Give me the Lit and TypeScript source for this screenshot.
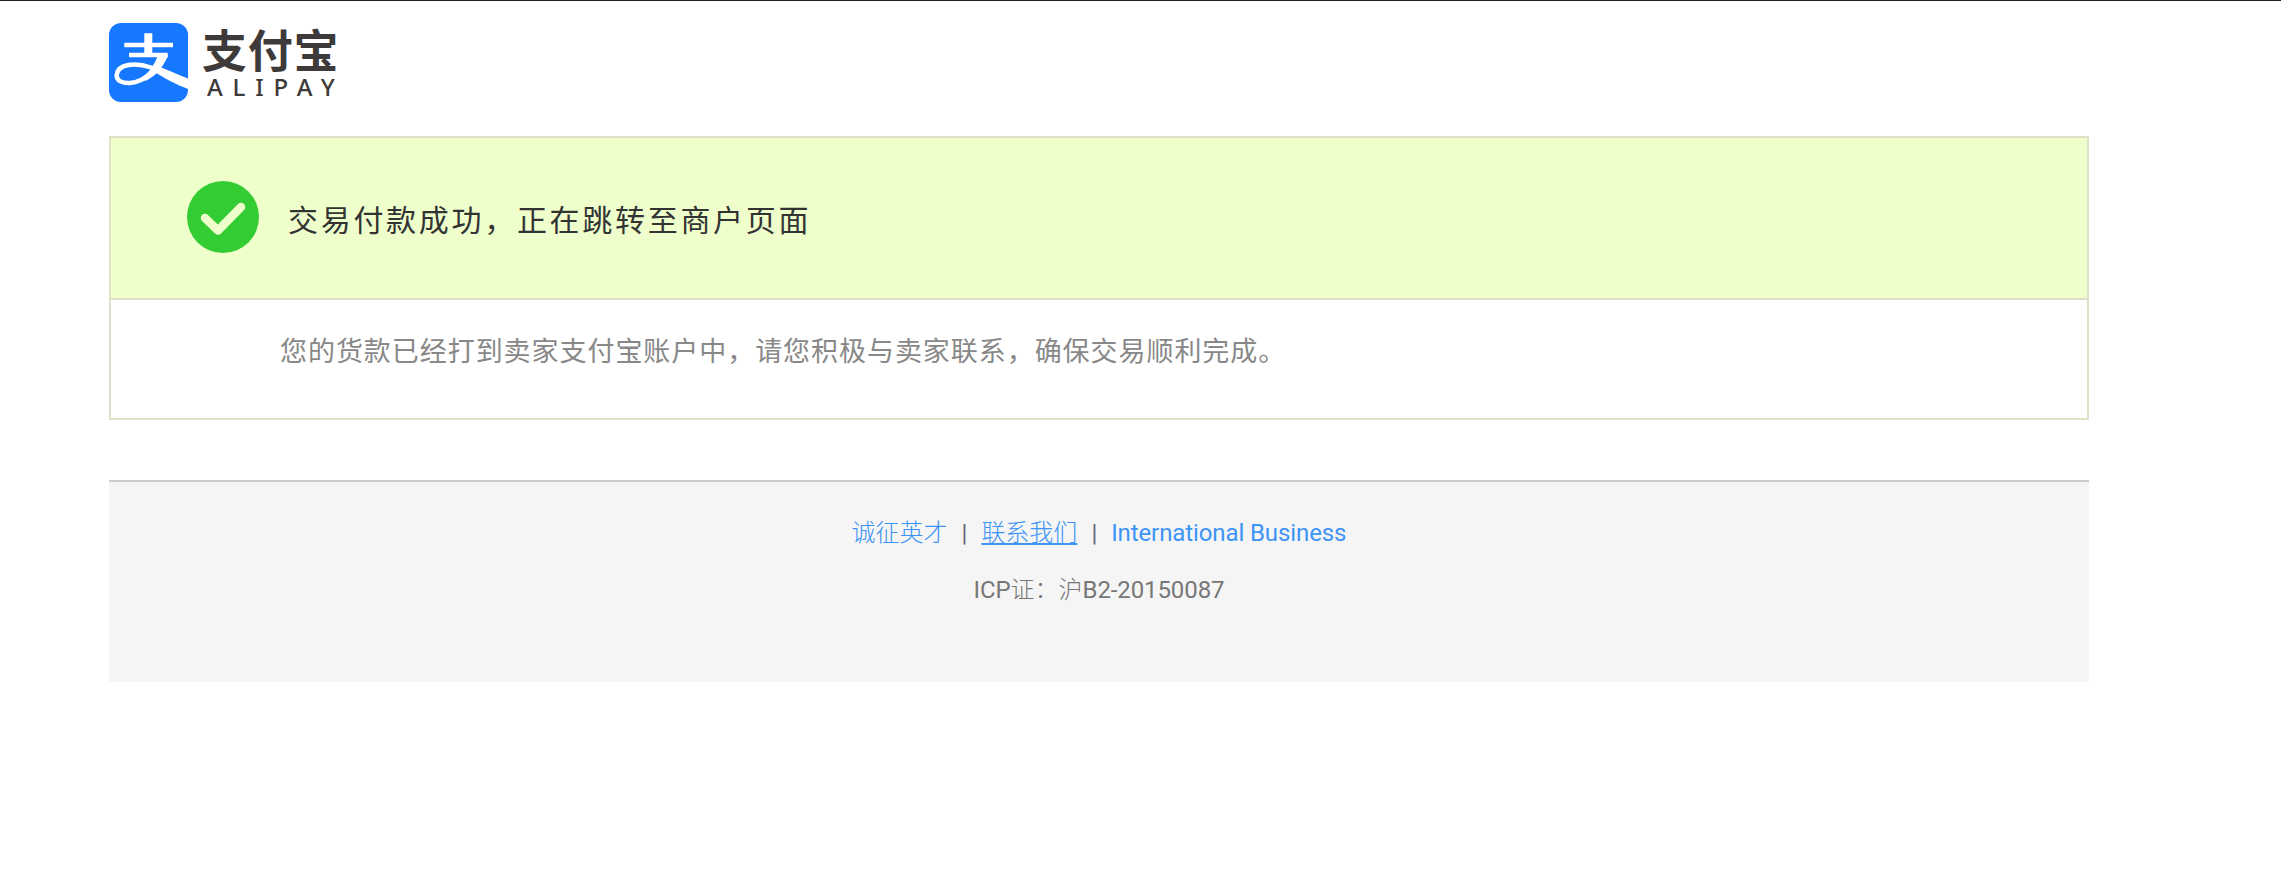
import { LitElement, html, css } from "lit";
import { customElement } from "lit/decorators.js";

@customElement("app-root")
export class AppRoot extends LitElement {
  static styles = css`
    :host { display: block; min-height: 874px; background: #fff; border-top: 1px solid #222; box-sizing: border-box; font-family: "Noto Sans CJK SC", sans-serif; }
    .page { width: 1980px; margin-left: 109px; }
    .logo { display: flex; align-items: flex-start; height: 79px; margin-top: 22px; gap: 14px; }
    .mark { width: 79px; height: 79px; display: block; flex: none; }
    .word { display: flex; flex-direction: column; color: #3e3a39; padding-top: 1px; }
    .cn { font-size: 45px; font-weight: 700; line-height: 50px; height: 50px; letter-spacing: 0.8px; }
    .en { font-family: "Noto Sans", sans-serif; font-weight: 500; font-size: 24px; line-height: 24px; letter-spacing: 9.8px; padding-left: 5px; margin-top: 1px; white-space: nowrap; }
    .card { margin-top: 34px; border: 2px solid #e0e0c8; }
    .head { height: 160px; background: #eeffcc; border-bottom: 2px solid #e0e0c8; display: flex; align-items: center; padding-left: 76px; gap: 29px; }
    .check { width: 72px; height: 72px; display: block; margin-bottom: 3px; }
    .title { font-size: 30px; letter-spacing: 2.7px; color: #333; font-weight: 400; }
    .body { height: 118px; padding-left: 169px; display: flex; align-items: center; box-sizing: border-box; padding-bottom: 20px; font-size: 27px; letter-spacing: 0.95px; color: #888; font-weight: 400; }
    .foot { margin-top: 60px; border-top: 2px solid #ccc; background: #f5f5f5; height: 202px; box-sizing: border-box; padding-top: 29px; text-align: center; font-size: 24px; line-height: 40px; color: #777; font-weight: 300; }
    .foot a { color: #3d94f6; text-decoration: none; }
    .foot a.u { text-decoration: underline; }
    .foot .sep { color: #667; margin: 0 14px; }
    .lat { font-family: Roboto, sans-serif; font-weight: 400; letter-spacing: -0.1px; }
    .row + .row { margin-top: 15px; }
  `;
  render() {
    return html`<div class="page">
      <div class="logo">
        <svg class="mark" viewBox="0 0 79 79">
          <rect width="79" height="79" rx="12" fill="#1677ff"/>
          <path fill="#fff" d="M15.300 19.700h20v-9.400h8v9.400h20.700v4.600h-20.700v5.400h15.400v4.600h-38.700v-4.600h15.300v-5.400h-20z"/>
          <path fill="none" stroke="#fff" stroke-width="4.500" d="M79 62C62 56 52 48 42 44.500C26 39 9 41 7.800 51.500C7 58 14 60.500 21 60C36 58.500 50 46 57 32"/>
          <path fill="#fff" d="M44 41.500C56 45.500 67 51 79 55.500V66C66 61 56 55.500 44 48Z M49 32H59C54 45 46 54 36 58L33 54C41 49 46 41 49 32Z"/>
        </svg>
        <div class="word"><div class="cn">支付宝</div><div class="en">ALIPAY</div></div>
      </div>
      <div class="card">
        <div class="head">
          <svg class="check" viewBox="0 0 72 72"><circle cx="36" cy="36" r="36" fill="#33cc33"/><path d="M18 37L31 49.500L54 26" fill="none" stroke="#eeffcc" stroke-width="8.500" stroke-linecap="round" stroke-linejoin="round"/></svg>
          <div class="title">交易付款成功，正在跳转至商户页面</div>
        </div>
        <div class="body">您的货款已经打到卖家支付宝账户中，请您积极与卖家联系，确保交易顺利完成。</div>
      </div>
      <div class="foot">
        <div class="row"><a href="#">诚征英才</a><span class="sep lat">|</span><a class="u" href="#">联系我们</a><span class="sep lat">|</span><a class="lat" href="#">International Business</a></div>
        <div class="row"><span class="lat">ICP</span>证：沪<span class="lat">B2-20150087</span></div>
      </div>
    </div>`;
  }
}
